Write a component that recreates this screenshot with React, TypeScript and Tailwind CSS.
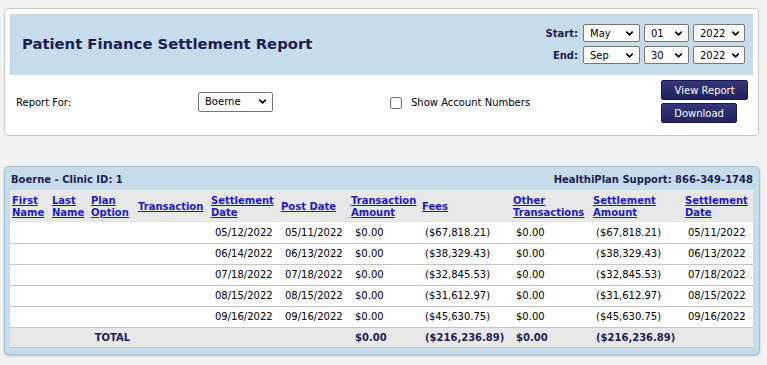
import { ChevronDown } from 'lucide-react';

const ROWS = [
  { settle: '05/12/2022', post: '05/11/2022', amount: '$0.00', fees: '($67,818.21)', other: '$0.00', total: '($67,818.21)', date: '05/11/2022' },
  { settle: '06/14/2022', post: '06/13/2022', amount: '$0.00', fees: '($38,329.43)', other: '$0.00', total: '($38,329.43)', date: '06/13/2022' },
  { settle: '07/18/2022', post: '07/18/2022', amount: '$0.00', fees: '($32,845.53)', other: '$0.00', total: '($32,845.53)', date: '07/18/2022' },
  { settle: '08/15/2022', post: '08/15/2022', amount: '$0.00', fees: '($31,612.97)', other: '$0.00', total: '($31,612.97)', date: '08/15/2022' },
  { settle: '09/16/2022', post: '09/16/2022', amount: '$0.00', fees: '($45,630.75)', other: '$0.00', total: '($45,630.75)', date: '09/16/2022' },
];

const COLUMNS: { label: string[]; width: number }[] = [
  { label: ['First', 'Name'], width: 40 },
  { label: ['Last', 'Name'], width: 39 },
  { label: ['Plan', 'Option'], width: 47 },
  { label: ['Transaction'], width: 73 },
  { label: ['Settlement', 'Date'], width: 70 },
  { label: ['Post Date'], width: 70 },
  { label: ['Transaction', 'Amount'], width: 71 },
  { label: ['Fees'], width: 91 },
  { label: ['Other', 'Transactions'], width: 80 },
  { label: ['Settlement', 'Amount'], width: 92 },
  { label: ['Settlement', 'Date'], width: 70 },
];

export default function App() {
  return (
    <div className="min-h-[365px] bg-[#f2f2f2] px-[4px] pt-[8px] text-[10px] text-black [font-family:'DejaVu_Sans',Verdana,sans-serif]">
      <div className="w-[755px] rounded-[4px] border border-[#c9c9c9] bg-white p-[5px] pb-[12px]">
        <div className="flex items-center justify-between bg-[#c7dcea] pb-[11px] pl-[12px] pr-[8px] pt-[10px]">
          <h1 className="text-[14.8px] font-bold text-[#1c1c55]">Patient Finance Settlement Report</h1>
          <div className="grid grid-cols-[auto_auto_auto_auto] items-center gap-x-[4px] gap-y-[4px]">
            <DateRow label="Start:" month="May" day="01" year="2022" />
            <DateRow label="End:" month="Sep" day="30" year="2022" />
          </div>
        </div>

        <div className="flex items-center pl-[6px] pt-[5px]">
          <div className="w-[182px] pt-[2px]">Report For:</div>
          <FakeSelect value="Boerne" className="h-[20px] w-[75px]" />
          <div className="ml-[117px] flex items-center gap-[9px] pt-[2px]">
            <span className="h-[12px] w-[12px] rounded-[3px] border border-[#6b6b6b] bg-white" />
            <span>Show Account Numbers</span>
          </div>
          <div className="ml-[131px] flex flex-col items-start gap-[3px]">
            <NavyButton className="w-[87px]">View Report</NavyButton>
            <NavyButton className="w-[76px]">Download</NavyButton>
          </div>
        </div>
      </div>

      <div className="mt-[30px] w-[756px] rounded-[5px] border border-[#a8c3d6] bg-[#c7dcea] px-[5px] pb-[6px] shadow-[0_1px_2px_rgba(0,0,0,0.25)]">
        <div className="flex h-[23px] items-center justify-between px-[1px] pt-[1px] font-bold text-[#1c1c55]">
          <span>Boerne - Clinic ID: 1</span>
          <span>HealthiPlan Support: 866-349-1748</span>
        </div>
        <table className="w-[743px] table-fixed border-collapse bg-white">
          <colgroup>
            {COLUMNS.map((col, i) => (
              <col key={i} style={{ width: col.width }} />
            ))}
          </colgroup>
          <thead>
            <tr className="h-[32px] bg-[#e8e8e8]">
              {COLUMNS.map((col, i) => (
                <th key={i} className="px-[2px] pt-[2px] text-left align-middle font-bold leading-[12px]">
                  <a href="#" className="text-[#1a1acc] underline">
                    {col.label.map((line, j) => (
                      <span key={j} className="block whitespace-nowrap">
                        {line}
                      </span>
                    ))}
                  </a>
                </th>
              ))}
            </tr>
          </thead>
          <tbody>
            {ROWS.map((row) => (
              <tr key={row.settle} className="h-[21px] border-b border-[#c4c4c4]">
                <td />
                <td />
                <td />
                <td />
                <td className="pl-[6px]">{row.settle}</td>
                <td className="pl-[6px]">{row.post}</td>
                <td className="pl-[6px]">{row.amount}</td>
                <td className="pl-[5px]">{row.fees}</td>
                <td className="pl-[5px]">{row.other}</td>
                <td className="pl-[5px]">{row.total}</td>
                <td className="pl-[5px]">{row.date}</td>
              </tr>
            ))}
            <tr className="h-[20px] border-b border-[#c4c4c4] bg-[#e8e8e8] font-bold text-[#1c1c55]">
              <td colSpan={4} className="pl-[6px] text-center">TOTAL</td>
              <td />
              <td />
              <td className="pl-[6px]">$0.00</td>
              <td className="pl-[5px]">($216,236.89)</td>
              <td className="pl-[5px]">$0.00</td>
              <td className="pl-[5px]">($216,236.89)</td>
              <td />
            </tr>
          </tbody>
        </table>
      </div>
    </div>
  );
}

function DateRow({ label, month, day, year }: { label: string; month: string; day: string; year: string }) {
  return (
    <>
      <span className="mr-[1px] text-right font-bold text-[#1c1c55]">{label}</span>
      <FakeSelect value={month} className="h-[18px] w-[57px]" />
      <FakeSelect value={day} className="h-[18px] w-[45px]" />
      <FakeSelect value={year} className="h-[18px] w-[52px]" compact />
    </>
  );
}

function FakeSelect({ value, className, compact }: { value: string; className: string; compact?: boolean }) {
  return (
    <div
      className={`flex items-center justify-between rounded-[2px] border border-[#767676] bg-white ${compact ? 'pl-[6px] pr-[3px]' : 'pl-[6px] pr-[4px]'} ${className}`}
    >
      <span>{value}</span>
      <ChevronDown size={11} strokeWidth={3.5} className="text-black" />
    </div>
  );
}

function NavyButton({ children, className }: { children: string; className: string }) {
  return (
    <button
      className={`h-[20px] rounded-[2px] border border-[#1a1a48] bg-gradient-to-b from-[#35357a] to-[#22225e] text-center text-[10px] text-white ${className}`}
    >
      {children}
    </button>
  );
}
